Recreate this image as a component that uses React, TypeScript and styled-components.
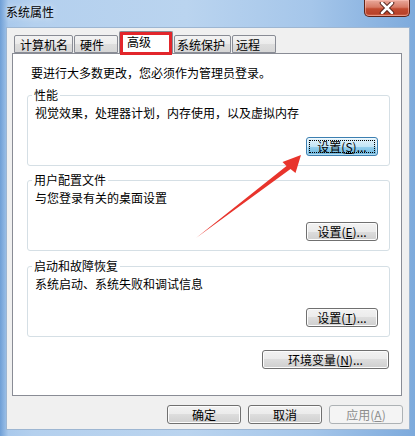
import styled, { createGlobalStyle } from "styled-components";

const GlobalStyle = createGlobalStyle`
  body {
    margin: 0;
    font-family: "Noto Sans CJK SC", "Liberation Sans", sans-serif;
    font-size: 12px;
    color: #000;
  }
`;

const tabs = [
  { label: "计算机名", width: 59, pad: 5 },
  { label: "硬件", width: 44, pad: 5 },
  { label: "高级", width: 54, pad: 7, active: true },
  { label: "系统保护", width: 57, pad: 2 },
  { label: "远程", width: 44, pad: 3 },
];

const groups = [
  { title: "性能", text: "视觉效果，处理器计划，内存使用，以及虚拟内存", key: "S", focused: true },
  { title: "用户配置文件", text: "与您登录有关的桌面设置", key: "E" },
  { title: "启动和故障恢复", text: "系统启动、系统失败和调试信息", key: "T" },
];

function Access({ k }: { k: string }) {
  return (
    <>
      (<u>{k}</u>)...
    </>
  );
}

function App() {
  return (
    <>
      <GlobalStyle />
      <Window>
        <TitleBar>
          <Title>系统属性</Title>
          <CloseButton>
            <svg width="16" height="12" viewBox="0 0 16 12">
              <path d="M3 1 L13 11 M13 1 L3 11" stroke="#4a1c14" strokeWidth="4.5" strokeLinecap="round" />
              <path d="M3 1 L13 11 M13 1 L3 11" stroke="#fff" strokeWidth="2.6" strokeLinecap="round" />
            </svg>
          </CloseButton>
        </TitleBar>
        <Client>
          <TabStrip>
            {tabs.map((t) => (
              <Tab key={t.label} $width={t.width} $pad={t.pad} $active={!!t.active}>
                {t.label}
              </Tab>
            ))}
          </TabStrip>
          <Panel>
            <Notice>要进行大多数更改，您必须作为管理员登录。</Notice>
            {groups.map((g) => (
              <GroupBox key={g.title}>
                <Legend>{g.title}</Legend>
                <GroupText>{g.text}</GroupText>
                <Button $width={72} $focused={!!g.focused}>
                  设置<Access k={g.key} />
                </Button>
              </GroupBox>
            ))}
            <EnvButton $width={127}>
              环境变量<Access k="N" />
            </EnvButton>
          </Panel>
          <ButtonRow>
            <Button $width={74}>确定</Button>
            <Button $width={74}>取消</Button>
            <Button $width={74} disabled>
              应用(<u>A</u>)
            </Button>
          </ButtonRow>
        </Client>
        <Arrow width="415" height="436" viewBox="0 0 415 436">
          <polygon
            points="196,238 286.5,166 282.5,162 301,155 295.5,173 290.5,169"
            fill="#e8342c"
          />
        </Arrow>
      </Window>
    </>
  );
}

const Window = styled.div`
  position: relative;
  width: 415px;
  height: 436px;
  box-sizing: border-box;
  padding: 0 5px 6px 6px;
  display: flex;
  flex-direction: column;
  background: linear-gradient(to right, #6f9fd6 0%, #a9c9ec 2%, #b4d0ee 8%, #bad4ef 45%, #a5c6ea 75%, #7daadc 100%);
`;

const TitleBar = styled.div`
  height: 27px;
  display: flex;
  justify-content: space-between;
  align-items: flex-start;
`;

const Title = styled.div`
  padding-top: 4px;
  line-height: 16px;
  font-size: 12px;
  text-shadow: 0 0 6px rgba(255, 255, 255, 0.9);
`;

const CloseButton = styled.div`
  width: 46px;
  height: 17px;
  box-sizing: border-box;
  display: flex;
  align-items: center;
  justify-content: center;
  border: 1px solid #5e2318;
  border-top: none;
  border-radius: 0 0 5px 5px;
  background: linear-gradient(#e9a99b 0%, #d77a65 45%, #c14b31 55%, #b8432b 85%, #d46a4f 100%);
  box-shadow: inset 0 0 0 1px rgba(255, 200, 190, 0.5);
`;

const Client = styled.div`
  flex: 1;
  display: flex;
  flex-direction: column;
  box-sizing: border-box;
  padding: 3px 7px 5px 5px;
  background: #f0f0f0;
  border: 1px solid #9db6d2;
`;

const TabStrip = styled.div`
  height: 22px;
  display: flex;
  align-items: flex-start;
  gap: 1px;
  padding-left: 2px;
`;

const Tab = styled.div<{ $width: number; $pad: number; $active: boolean }>`
  position: relative;
  width: ${(p) => p.$width}px;
  height: ${(p) => (p.$active ? 23 : 18)}px;
  margin-top: ${(p) => (p.$active ? 0 : 4)}px;
  box-sizing: border-box;
  padding-left: ${(p) => p.$pad}px;
  white-space: nowrap;
  line-height: ${(p) => (p.$active ? 19 : 17)}px;
  border: 1px solid #898c95;
  border-bottom: ${(p) => (p.$active ? "none" : "1px solid #898c95")};
  border-radius: 2px 2px 0 0;
  background: ${(p) => (p.$active ? "#fff" : "linear-gradient(#f3f3f3, #ebebeb 50%, #dedede 50%, #d6d6d6)")};
  z-index: ${(p) => (p.$active ? 2 : 0)};

  &::after {
    content: "";
    display: ${(p) => (p.$active ? "block" : "none")};
    position: absolute;
    inset: 0 0 -1px 0;
    border: 3px solid #e2262b;
  }
`;

const Panel = styled.div`
  flex: 1;
  display: flex;
  flex-direction: column;
  box-sizing: border-box;
  background: #fff;
  border: 1px solid #898c95;
  padding: 11px 11px 0 14px;
`;

const Notice = styled.div`
  line-height: 16px;
  margin-left: 4px;
  margin-bottom: 14px;
`;

const GroupBox = styled.div`
  height: 71px;
  box-sizing: border-box;
  display: flex;
  flex-direction: column;
  border: 1px solid #d5dfe5;
  border-radius: 3px;
  padding: 0 11px 9px 7px;
  & + & {
    margin-top: 15px;
  }
  &:nth-of-type(3) {
    margin-top: 14px;
  }
`;

const Legend = styled.div`
  width: fit-content;
  margin: -9px 0 0 -3px;
  padding: 0 2px;
  line-height: 16px;
  background: #fff;
`;

const GroupText = styled.div`
  margin-top: 2px;
  line-height: 16px;
`;

const Button = styled.button<{ $width: number; $focused?: boolean }>`
  width: ${(p) => p.$width}px;
  height: 19px;
  padding: 0;
  margin-top: auto;
  align-self: flex-end;
  font-family: inherit;
  font-size: 12px;
  line-height: 15px;
  color: #000;
  border: 1px solid ${(p) => (p.$focused ? "#3c7fb1" : "#707070")};
  border-radius: 3px;
  background: ${(p) =>
    p.$focused
      ? "linear-gradient(#e5f4fc, #c4e5f6 50%, #98d1ef 50%, #68b3db)"
      : "linear-gradient(#f2f2f2, #ebebeb 50%, #dddddd 50%, #cfcfcf)"};
  box-shadow: inset 0 0 0 1px ${(p) => (p.$focused ? "rgba(255,255,255,0.5)" : "#fcfcfc")};
  outline: ${(p) => (p.$focused ? "1px dotted #000" : "none")};
  outline-offset: -4px;

  &:disabled {
    color: #8d8d8d;
    border-color: #adb2b5;
    background: #f4f4f4;
    box-shadow: none;
  }
`;

const EnvButton = styled(Button)`
  margin-top: 13px;
  margin-right: 1px;
`;

const ButtonRow = styled.div`
  display: flex;
  justify-content: flex-end;
  gap: 7px;
  margin-top: 9px;
  margin-right: -1px;
`;

const Arrow = styled.svg`
  position: absolute;
  left: 0;
  top: 0;
  pointer-events: none;
`;

export default App;
